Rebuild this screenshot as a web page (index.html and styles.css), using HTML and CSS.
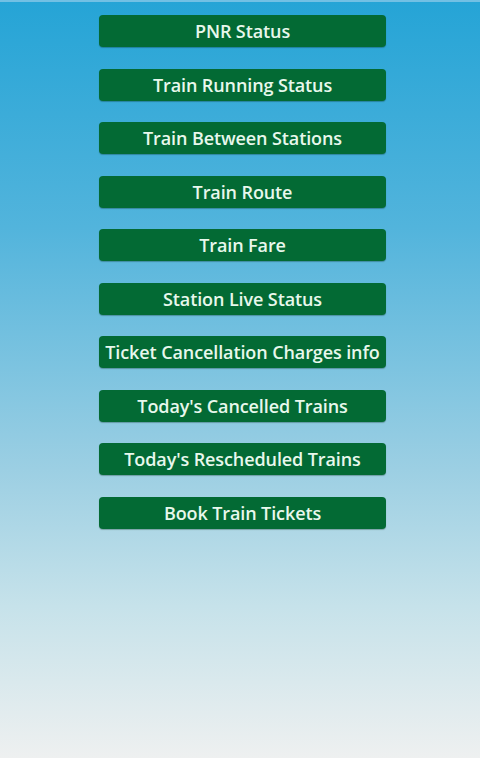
FILE: index.html
```html
<!DOCTYPE html>
<html lang="en">
<head>
    <meta charset="UTF-8">
    <meta name="viewport" content="width=device-width, initial-scale=1.0">
    <title>Train Enquiry</title>
    <link rel="stylesheet" href="styles.css">
</head>
<body>
    <div class="menu">
        <button class="btn">PNR Status</button>
        <button class="btn">Train Running Status</button>
        <button class="btn">Train Between Stations</button>
        <button class="btn">Train Route</button>
        <button class="btn">Train Fare</button>
        <button class="btn">Station Live Status</button>
        <button class="btn">Ticket Cancellation Charges info</button>
        <button class="btn">Today's Cancelled Trains</button>
        <button class="btn">Today's Rescheduled Trains</button>
        <button class="btn">Book Train Tickets</button>
    </div>
</body>
</html>
```

FILE: styles.css
```css
html, body {
    margin: 0;
    height: 100%;
}

body {
    border-top: 2px solid #72c0e4;
    box-sizing: border-box;
    background: linear-gradient(to bottom, #25a4d6 0%, #52b4dc 30%, #9ccfe3 62%, #c6e2ea 80%, #eef0f0 100%);
    font-family: "Open Sans", "DejaVu Sans", sans-serif;
}

.menu {
    display: flex;
    flex-direction: column;
    gap: 21.5px;
    width: 287px;
    margin-left: 99px;
    padding-top: 13px;
}

.btn {
    height: 32px;
    border: none;
    border-radius: 4px;
    background: #036a34;
    color: #e8f8ec;
    font-family: inherit;
    font-size: 18px;
    font-weight: 600;
    letter-spacing: -0.1px;
    padding: 0;
    box-shadow: 0 1px 1px rgba(0, 40, 20, 0.3);
    cursor: pointer;
}
```
